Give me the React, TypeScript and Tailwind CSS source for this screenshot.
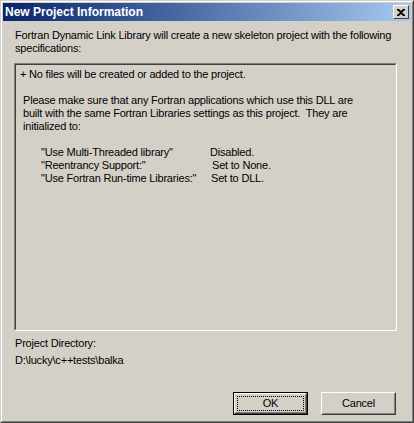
import React from 'react';

const font = { fontFamily: '"Liberation Sans", Arial, sans-serif' };

const settings = [
  { name: '"Use Multi-Threaded library"', value: 'Disabled.', pad: 'pl-0' },
  { name: '"Reentrancy Support:"', value: 'Set to None.', pad: 'pl-[2px]' },
  { name: '"Use Fortran Run-time Libraries:"', value: 'Set to DLL.', pad: 'pl-px' },
];

const App: React.FC = () => {
  return (
    <div
      className="w-[414px] h-[423px] border border-t-[#d4d0c8] border-l-[#d4d0c8] border-r-[#404040] border-b-[#404040] bg-[#d4d0c8] text-black tracking-[-0.2px]"
      style={font}
    >
      <div className="h-full border border-t-white border-l-white border-r-[#808080] border-b-[#808080] p-px flex flex-col">
        {/* Title bar */}
        <div className="h-[18px] flex items-center justify-between pl-[2px] pr-[2px] bg-gradient-to-r from-[#0a246a] to-[#a6caf0]">
          <span className="text-white font-bold text-[12px] leading-none tracking-normal">New Project Information</span>
          <button className="w-4 h-[14px] bg-[#d4d0c8] border border-t-white border-l-white border-r-[#404040] border-b-[#404040] flex items-center justify-center">
            <svg width="8" height="7" viewBox="0 0 8 7">
              <path d="M0 0h2l2 2 2-2h2v1L5 3.5 8 6v1H6L4 5 2 7H0V6l3-2.5L0 1z" fill="#000" />
            </svg>
          </button>
        </div>

        {/* Intro */}
        <p className="mt-2 ml-3 text-[11px] leading-[13px] w-[392px]">
          Fortran Dynamic Link Library will create a new skeleton project with the following specifications:
        </p>

        {/* Info box */}
        <div className="mt-2 ml-[11px] w-[383px] h-[268px] border border-t-[#808080] border-l-[#808080] border-r-white border-b-white">
          <div className="h-full border border-t-[#404040] border-l-[#404040] border-r-[#d4d0c8] border-b-[#d4d0c8] pt-[3px] pl-[4px] text-[11px] leading-[13px]">
            <p>+ No files will be created or added to the project.</p>
            <p className="mt-[13px] pl-[3px] w-[345px]">
              Please make sure that any Fortran applications which use this DLL are built with the same Fortran Libraries
              settings as this project.&nbsp; They are initialized to:
            </p>
            <div className="mt-[13px] pl-[21px]">
              {settings.map((s) => (
                <div key={s.name} className="flex">
                  <span className="w-[169px]">{s.name}</span>
                  <span className={s.pad}>{s.value}</span>
                </div>
              ))}
            </div>
          </div>
        </div>

        {/* Project directory */}
        <p className="mt-[6px] ml-3 text-[11px] leading-[13px]">Project Directory:</p>
        <p className="mt-1 ml-3 text-[11px] leading-[13px]">D:\lucky\c++tests\balka</p>

        {/* Buttons */}
        <div className="mt-[25px] flex justify-end gap-[13px] pr-[15px]">
          <button className="w-[75px] h-[23px] border border-black">
            <div className="h-full border border-t-white border-l-white border-r-[#404040] border-b-[#404040]">
              <div className="h-full border border-t-[#d4d0c8] border-l-[#d4d0c8] border-r-[#808080] border-b-[#808080] p-px">
                <div className="h-full border border-dotted border-black flex items-center justify-center text-[11px] leading-none">
                  OK
                </div>
              </div>
            </div>
          </button>
          <button className="w-[75px] h-[23px] border border-t-white border-l-white border-r-[#404040] border-b-[#404040]">
            <div className="h-full border border-t-[#d4d0c8] border-l-[#d4d0c8] border-r-[#808080] border-b-[#808080] flex items-center justify-center text-[11px] leading-none">
              Cancel
            </div>
          </button>
        </div>
      </div>
    </div>
  );
};

export default App;
